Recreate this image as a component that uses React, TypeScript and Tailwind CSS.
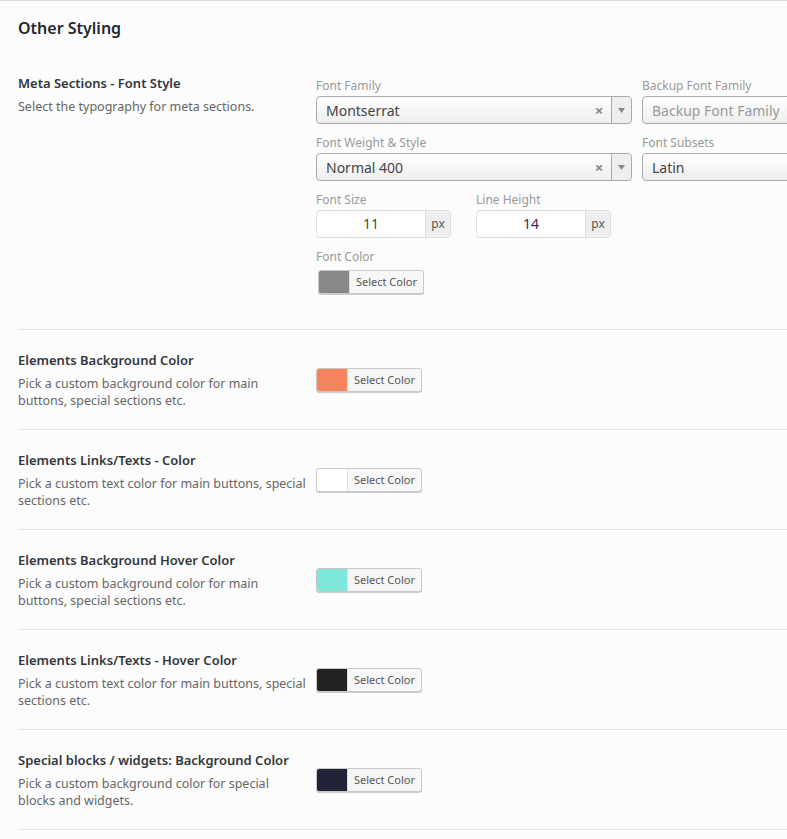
const font = { fontFamily: '"Noto Sans", "Open Sans", sans-serif' }

interface ColorRow {
  title: string
  desc: string
  color: string
}

const colorRows: ColorRow[] = [
  {
    title: "Elements Background Color",
    desc: "Pick a custom background color for main buttons, special sections etc.",
    color: "bg-[#f5845f]",
  },
  {
    title: "Elements Links/Texts - Color",
    desc: "Pick a custom text color for main buttons, special sections etc.",
    color: "bg-white",
  },
  {
    title: "Elements Background Hover Color",
    desc: "Pick a custom background color for main buttons, special sections etc.",
    color: "bg-[#7ce7da]",
  },
  {
    title: "Elements Links/Texts - Hover Color",
    desc: "Pick a custom text color for main buttons, special sections etc.",
    color: "bg-[#222222]",
  },
  {
    title: "Special blocks / widgets: Background Color",
    desc: "Pick a custom background color for special blocks and widgets.",
    color: "bg-[#212338]",
  },
]

function ColorButton({ color }: { color: string }) {
  return (
    <div className="flex h-[24px] w-[106px] overflow-hidden rounded-[3px] border border-[#cfc6c6] bg-[#f7f7f7] shadow-[0_1px_0_#ccc]">
      <span className={`w-[31px] h-full border-r border-[#ddd] ${color}`} />
      <span className="flex-1 text-center text-[11px] leading-[22px] text-[#555]">Select Color</span>
    </div>
  )
}

function Label({ children }: { children: React.ReactNode }) {
  return <div className="text-[12px] leading-[16px] text-[#999] mb-[2px]">{children}</div>
}

function SelectBox({ value, clearable, placeholder }: { value: string; clearable?: boolean; placeholder?: boolean }) {
  return (
    <div className="flex h-[28px] w-[316px] items-center rounded-[4px] border border-[#aaa] bg-gradient-to-b from-white to-[#eee]">
      <span className={`flex-1 pl-[9px] text-[14px] ${placeholder ? "text-[#999]" : "text-[#444]"}`}>{value}</span>
      {clearable && (
        <>
          <span className="w-[24px] text-center text-[15px] font-bold leading-none text-[#888]">×</span>
          <span className="flex h-full w-[20px] items-center justify-center border-l border-[#aaa] bg-[#eee] rounded-r-[4px]">
            <svg width="7" height="5" viewBox="0 0 7 5">
              <path d="M0 0h7L3.5 5z" fill="#888" />
            </svg>
          </span>
        </>
      )}
    </div>
  )
}

function UnitInput({ value, tone }: { value: string; tone: string }) {
  return (
    <div className="flex h-[28px] w-[135px] rounded-[4px] border border-[#ddd] bg-white">
      <span className={`flex-1 text-center text-[14px] leading-[26px] ${tone}`}>{value}</span>
      <span className="w-[25px] border-l border-[#ddd] bg-[#eee] text-center text-[12px] leading-[26px] text-[#555] rounded-r-[4px]">
        px
      </span>
    </div>
  )
}

export default function App() {
  return (
    <div className="min-h-[839px] w-[787px] overflow-hidden border-t border-[#ddd] bg-[#fcfcfc]" style={font}>
      <div className="pl-[18px]">
        <h2 className="pt-[15px] text-[16px] font-semibold leading-[24px] text-[#23282d]">Other Styling</h2>

        <div className="flex pt-[33px] pb-[35px]">
          <div className="w-[298px] shrink-0">
            <div className="text-[13px] font-semibold leading-[20px] text-[#32373c]">Meta Sections - Font Style</div>
            <div className="mt-[5px] text-[12.5px] leading-[17px] text-[#666]">Select the typography for meta sections.</div>
          </div>
          <div className="pt-[5px]">
            <div className="flex gap-[10px]">
              <div>
                <Label>Font Family</Label>
                <SelectBox value="Montserrat" clearable />
              </div>
              <div>
                <Label>Backup Font Family</Label>
                <SelectBox value="Backup Font Family" placeholder />
              </div>
            </div>
            <div className="mt-[11px] flex gap-[10px]">
              <div>
                <Label>Font Weight &amp; Style</Label>
                <SelectBox value="Normal 400" clearable />
              </div>
              <div>
                <Label>Font Subsets</Label>
                <SelectBox value="Latin" />
              </div>
            </div>
            <div className="mt-[11px] flex gap-[25px]">
              <div>
                <Label>Font Size</Label>
                <UnitInput value="11" tone="text-[#1f5a1f]" />
              </div>
              <div>
                <Label>Line Height</Label>
                <UnitInput value="14" tone="text-[#4a1f5a]" />
              </div>
            </div>
            <div className="mt-[11px]">
              <div className="text-[12px] leading-[16px] text-[#999] mb-[5px]">Font Color</div>
              <div className="pl-[2px]">
                <ColorButton color="bg-[#888888]" />
              </div>
            </div>
          </div>
        </div>

        {colorRows.map((row) => (
          <div key={row.title} className="flex items-center border-t border-[#e5e5e5] pt-[20px] pb-[20px]">
            <div className="w-[298px] shrink-0">
              <div className="text-[13px] font-semibold leading-[20px] text-[#32373c]">{row.title}</div>
              <div className="mt-[5px] pr-[8px] text-[12.5px] leading-[17px] text-[#666]">{row.desc}</div>
            </div>
            <ColorButton color={row.color} />
          </div>
        ))}
        <div className="border-t border-[#e5e5e5]" />
      </div>
    </div>
  )
}
